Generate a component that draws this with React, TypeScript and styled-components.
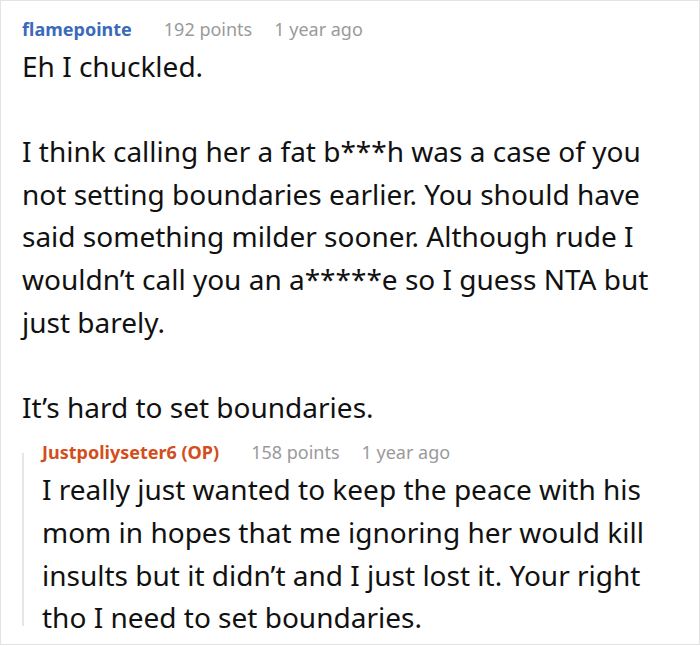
import React from "react";
import styled, { createGlobalStyle } from "styled-components";

const GlobalStyle = createGlobalStyle`
  html, body {
    margin: 0;
    padding: 0;
    background: #ffffff;
  }
  body {
    font-family: "Noto Sans", "Open Sans", sans-serif;
  }
`;

const Card = styled.div`
  box-sizing: border-box;
  width: 700px;
  height: 645px;
  border: 1px solid #e3e3e3;
  padding: 12px 20px 0 21px;
  overflow: hidden;
`;

const Comment = styled.div<{ $reply?: boolean }>`
  position: relative;
  ${(p) =>
    p.$reply &&
    `
    margin-top: 8px;
    padding-left: 20px;
    &::before {
      content: "";
      position: absolute;
      left: 0;
      top: 17px;
      bottom: 13px;
      width: 2px;
      background: #e6e6e6;
    }
  `}
`;

const Meta = styled.div`
  display: flex;
  align-items: baseline;
  gap: 22px;
  font-size: 18px;
  line-height: 32px;
`;

const Author = styled.span<{ $op?: boolean }>`
  font-weight: 700;
  margin-right: 10px;
  color: ${(p) => (p.$op ? "#d24e1b" : "#3b6bb8")};
`;

const Info = styled.span`
  color: #9a9a9a;
`;

const Body = styled.div`
  font-size: 28px;
  line-height: 42.6px;
  color: #111111;
  p {
    margin: 0;
  }
  p + p {
    margin-top: 42.6px;
  }
`;

const comments = [
  {
    author: "flamepointe",
    points: "192 points",
    time: "1 year ago",
    op: false,
    paragraphs: [
      "Eh I chuckled.",
      "I think calling her a fat b***h was a case of you not setting boundaries earlier. You should have said something milder sooner. Although rude I wouldn\u2019t call you an a*****e so I guess NTA but just barely.",
      "It\u2019s hard to set boundaries.",
    ],
  },
  {
    author: "Justpoliyseter6 (OP)",
    points: "158 points",
    time: "1 year ago",
    op: true,
    paragraphs: [
      "I really just wanted to keep the peace with his mom in hopes that me ignoring her would kill insults but it didn\u2019t and I just lost it. Your right tho I need to set boundaries.",
    ],
  },
];

const App: React.FC = () => {
  return (
    <>
      <GlobalStyle />
      <Card>
        {comments.map((c, i) => (
          <Comment key={`comment_${i}`} $reply={i > 0}>
            <Meta>
              <Author $op={c.op}>{c.author}</Author>
              <Info>{c.points}</Info>
              <Info>{c.time}</Info>
            </Meta>
            <Body>
              {c.paragraphs.map((t, j) => (
                <p key={j}>{t}</p>
              ))}
            </Body>
          </Comment>
        ))}
      </Card>
    </>
  );
};

export default App;
